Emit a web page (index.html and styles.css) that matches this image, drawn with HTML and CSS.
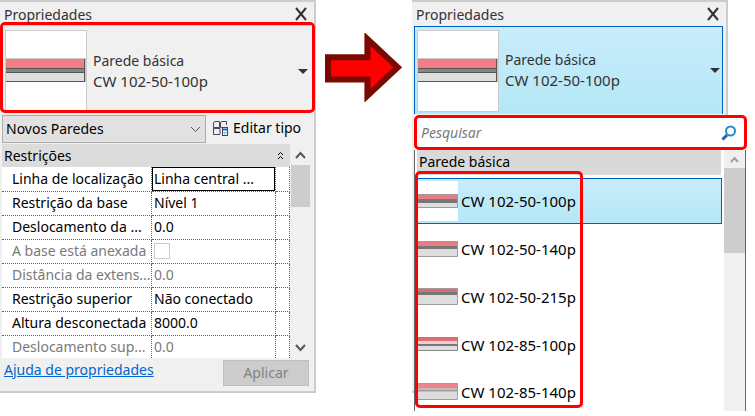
FILE: index.html
```html
<!DOCTYPE html>
<html lang="pt">

<head>
    <meta charset="UTF-8">
    <meta name="viewport" content="width=device-width, initial-scale=1.0">
    <title>Propriedades</title>
    <link rel="stylesheet" href="styles.css">
</head>

<body>
    <main class="page">
        <!-- Properties palette -->
        <section class="panel">
            <header class="title-bar">
                <h2>Propriedades</h2>
                <button class="close" aria-label="Fechar">
                    <svg width="14" height="14" viewBox="0 0 14 14"><path d="M2 1 L12 13 M12 1 L2 13" /></svg>
                </button>
            </header>

            <div class="highlight">
                <button class="type-selector">
                    <svg class="preview" viewBox="0 0 82 82">
                        <use href="#wall" />
                    </svg>
                    <span class="type-name">Parede básica<br><span class="code">CW 102-50-100p</span></span>
                    <span class="caret"></span>
                </button>
            </div>

            <div class="filter">
                <select aria-label="Filtro">
                    <option>Novos Paredes</option>
                </select>
                <button class="edit-type">
                    <svg width="17" height="17" viewBox="0 0 17 17">
                        <path class="sheet" d="M1.500 2.500 L3 1.500 H7.500 V7.500 H1.500 Z M8.500 7.500 V2.500 L10 1.500 H14.500 V5 M1.500 7.500 V14.500 H8 M8.500 7.500 H10 M1.500 9.500 L3 8.500 H8 V14" />
                        <rect class="calc" x="10.500" y="7.500" width="5" height="8" />
                        <path class="screen" d="M11 9.500 H15" />
                        <path class="keys" d="M11.500 12.500 H12.500 M13.500 12.500 H14.500 M12.500 14 H13.500" />
                    </svg>
                    Editar tipo
                </button>
            </div>

            <div class="grid-area">
                <table class="properties">
                    <colgroup>
                        <col class="col-name">
                        <col class="col-value">
                        <col class="col-link">
                    </colgroup>
                    <thead>
                        <tr>
                            <th colspan="3">
                                <div class="group">
                                    Restrições
                                    <button class="collapse" aria-label="Recolher">
                                        <svg width="7" height="10" viewBox="0 0 7 10"><path d="M1 4 L3.500 1.500 L6 4 M1 8 L3.500 5.500 L6 8" /></svg>
                                    </button>
                                </div>
                            </th>
                        </tr>
                    </thead>
                    <tbody>
                        <tr>
                            <td><label for="line">Linha de localização</label></td>
                            <td class="current"><input id="line" type="text" value="Linha central ..."></td>
                            <td></td>
                        </tr>
                        <tr>
                            <td><label for="base">Restrição da base</label></td>
                            <td><input id="base" type="text" value="Nível 1"></td>
                            <td></td>
                        </tr>
                        <tr>
                            <td><label for="offset">Deslocamento da ...</label></td>
                            <td><input id="offset" type="text" value="0.0"></td>
                            <td></td>
                        </tr>
                        <tr class="disabled">
                            <td><label for="attached">A base está anexada</label></td>
                            <td><input id="attached" type="checkbox" disabled></td>
                            <td></td>
                        </tr>
                        <tr class="disabled">
                            <td><label for="extension">Distância da extens...</label></td>
                            <td><input id="extension" type="text" value="0.0" disabled></td>
                            <td></td>
                        </tr>
                        <tr>
                            <td><label for="top">Restrição superior</label></td>
                            <td><input id="top" type="text" value="Não conectado"></td>
                            <td></td>
                        </tr>
                        <tr>
                            <td><label for="height">Altura desconectada</label></td>
                            <td><input id="height" type="text" value="8000.0"></td>
                            <td></td>
                        </tr>
                        <tr class="disabled">
                            <td><label for="top-offset">Deslocamento sup...</label></td>
                            <td><input id="top-offset" type="text" value="0.0" disabled></td>
                            <td></td>
                        </tr>
                    </tbody>
                </table>
                <div class="scrollbar">
                    <button aria-label="Para cima"><svg width="11" height="8" viewBox="0 0 11 8"><path d="M1 7 L5.500 2 L10 7" /></svg></button>
                    <div class="thumb"></div>
                    <button class="down" aria-label="Para baixo"><svg width="11" height="8" viewBox="0 0 11 8"><path d="M1 1 L5.500 6 L10 1" /></svg></button>
                </div>
            </div>

            <footer class="actions">
                <a href="#ajuda">Ajuda de propriedades</a>
                <button class="apply" disabled>Aplicar</button>
            </footer>
        </section>

        <svg class="arrow" viewBox="0 0 76 68">
            <path d="M3 24 H42 V6 L72 34 L42 62 V46 H3 V24 Z" />
        </svg>

        <!-- Same palette with the type list open -->
        <section class="panel panel-open">
            <header class="title-bar">
                <h2>Propriedades</h2>
                <button class="close" aria-label="Fechar">
                    <svg width="14" height="14" viewBox="0 0 14 14"><path d="M2 1 L12 13 M12 1 L2 13" /></svg>
                </button>
            </header>

            <button class="type-selector open">
                <svg class="preview" viewBox="0 0 82 82">
                    <use href="#wall" />
                </svg>
                <span class="type-name">Parede básica<br><span class="code">CW 102-50-100p</span></span>
                <span class="caret"></span>
            </button>

            <div class="dropdown">
                <div class="search">
                    <input type="search" placeholder="Pesquisar" aria-label="Pesquisar">
                    <svg width="16" height="16" viewBox="0 0 16 16">
                        <path d="M1.500 14.500 L6 10" />
                        <circle cx="9.500" cy="6" r="4.500" />
                    </svg>
                </div>
                <div class="list-area">
                    <div class="list">
                        <h3>Parede básica</h3>
                        <ul>
                            <li>
                                <button class="item selected">
                                    <svg class="mini" viewBox="0 0 40 40">
                                        <rect width="40" height="40" fill="#fff" />
                                        <rect y="13" width="40" height="5" fill="#e87c84" />
                                        <rect y="18" width="40" height="4" fill="#777" />
                                        <rect y="22" width="40" height="5" fill="#ddd" />
                                        <path d="M0 13.500 H40 M0 26.500 H39.500 V13" fill="none" stroke="#a39a9a" />
                                    </svg>
                                    <span class="code">CW 102-50-100p</span>
                                </button>
                            </li>
                            <li>
                                <button class="item">
                                    <svg class="mini" viewBox="0 0 40 40">
                                        <rect y="12" width="40" height="5" fill="#e87c84" />
                                        <rect y="17" width="40" height="3" fill="#777" />
                                        <rect y="20" width="40" height="8" fill="#ddd" />
                                        <path d="M0 12.500 H40 M0 27.500 H39.500 V12" fill="none" stroke="#a39a9a" />
                                    </svg>
                                    <span class="code">CW 102-50-140p</span>
                                </button>
                            </li>
                            <li>
                                <button class="item">
                                    <svg class="mini" viewBox="0 0 40 40">
                                        <rect y="11" width="40" height="4" fill="#dd6c75" />
                                        <rect y="15" width="40" height="3" fill="#777" />
                                        <rect y="18" width="40" height="9" fill="#ddd" />
                                        <path d="M0 11.500 H40 M0 27.500 H39.500 V11" fill="none" stroke="#a39a9a" />
                                    </svg>
                                    <span class="code">CW 102-50-215p</span>
                                </button>
                            </li>
                            <li>
                                <button class="item">
                                    <svg class="mini" viewBox="0 0 40 40">
                                        <rect y="12" width="40" height="4" fill="#dd6c75" />
                                        <rect y="16" width="40" height="3" fill="#eecfd0" />
                                        <rect y="19" width="40" height="2" fill="#777" />
                                        <rect y="21" width="40" height="4" fill="#ddd" />
                                        <path d="M0 12.500 H40 M0 25.500 H39.500 V12" fill="none" stroke="#888" />
                                    </svg>
                                    <span class="code">CW 102-85-100p</span>
                                </button>
                            </li>
                            <li>
                                <button class="item">
                                    <svg class="mini" viewBox="0 0 40 40">
                                        <rect y="11" width="40" height="5" fill="#ee838a" />
                                        <rect y="16" width="40" height="4" fill="#c4bcbc" />
                                        <rect y="20" width="40" height="7" fill="#ddd" />
                                        <path d="M0 11.500 H40 M0 18.500 H40 M0 27.500 H39.500 V11" fill="none" stroke="#a39a9a" />
                                    </svg>
                                    <span class="code">CW 102-85-140p</span>
                                </button>
                            </li>
                        </ul>
                    </div>
                    <div class="scrollbar">
                        <button aria-label="Para cima"><svg width="9" height="7" viewBox="0 0 9 7"><path d="M1 6 L4.500 2 L8 6" /></svg></button>
                        <div class="thumb"></div>
                    </div>
                </div>
                <div class="list-mark"></div>
            </div>
        </section>
    </main>

    <!-- Wall section used in both previews -->
    <svg class="defs">
        <symbol id="wall" viewBox="0 0 82 82">
            <rect x="0.500" y="0.500" width="81" height="81" fill="#fff" stroke="#ccc" />
            <rect x="1" y="28" width="80" height="24" fill="#c8c8c8" />
            <rect x="1" y="29" width="79" height="9" fill="#f27d85" />
            <rect x="1" y="38" width="79" height="5" fill="#858585" />
            <rect x="1" y="43" width="79" height="8" fill="#dedede" />
            <path d="M1 38.500 H80 M1 42.500 H80 M1 51.500 H80 M79.500 29 V52" fill="none" stroke="#555" />
        </symbol>
    </svg>
</body>

</html>
```

FILE: styles.css
```css
* {
    box-sizing: border-box;
}

body {
    margin: 0;
    background-color: #fff;
    color: #000;
    font-family: "Noto Sans", "Open Sans", sans-serif;
    font-size: 14px;
    line-height: 20px;
}

button,
input,
select {
    margin: 0;
    padding: 0;
    border: 0;
    background: none;
    color: inherit;
    font: inherit;
}

h2,
h3 {
    margin: 0;
    font-size: 14px;
    font-weight: normal;
}

svg {
    display: block;
    flex: none;
}

.defs {
    position: absolute;
    width: 0;
    height: 0;
}

.page {
    display: grid;
    grid-template-columns: 316fr 96fr 316fr 27fr;
    align-items: start;
    min-height: 100vh;
}

.panel {
    position: relative;
    border: 2px solid #ccc;
    border-left: 0;
    background-color: #f0f0f0;
}

.panel-open {
    min-height: 393px;
    padding-left: 2px;
}

.title-bar {
    display: flex;
    justify-content: space-between;
    align-items: center;
    height: 24px;
    padding: 0 6px 0 4px;
    color: #333;
}

.title-bar h2 {
    padding-top: 1px;
}

.panel-open .title-bar {
    padding-left: 2px;
}

.close path {
    fill: none;
    stroke: #333;
    stroke-width: 2;
}

/* Red marks drawn round the parts explained */
.highlight {
    margin: -4px -1px 0 0;
    border: 3px solid #f00;
    border-radius: 5px;
}

.type-selector {
    display: flex;
    align-items: center;
    gap: 6px;
    width: 100%;
    height: 85px;
    padding: 6px 4px 0 2px;
    color: #333;
    text-align: left;
    overflow: hidden;
}

.highlight .type-selector {
    border-top: 1px solid #ccc;
}

.preview {
    width: 82px;
    height: 82px;
}

.type-name {
    flex: 1;
}

.code {
    font-size: 15px;
}

.caret {
    border: 5px solid transparent;
    border-top-color: #333;
    border-bottom: 0;
}

.type-selector.open {
    width: calc(100% - 3px);
    height: 88px;
    border: 1px solid #0060bf;
    border-bottom: 0;
    background: linear-gradient(#c8ecfb, #b5e7f6);
    padding: 0 2px;
}

.filter {
    display: flex;
    gap: 6px;
    padding: 2px 0 1px 2px;
}

.filter select {
    appearance: none;
    width: 204px;
    height: 28px;
    padding: 0 3px;
    border: 1px solid #adadad;
    background: #e1e1e1 url("data:image/svg+xml,%3Csvg xmlns='http://www.w3.org/2000/svg' width='11' height='7'%3E%3Cpath d='M1 1 L5.500 5.500 L10 1' fill='none' stroke='%23555'/%3E%3C/svg%3E") no-repeat right 4px center;
}

.edit-type {
    display: flex;
    align-items: center;
    gap: 4px;
    height: 26px;
    white-space: nowrap;
}

.edit-type path,
.edit-type rect {
    fill: none;
    stroke: #45475a;
}

.edit-type .calc {
    fill: #fff;
}

.edit-type .screen,
.edit-type .keys {
    stroke: #0070c0;
}

.edit-type .screen {
    stroke-width: 2;
}

.grid-area {
    display: flex;
    padding: 0 4px 0 2px;
}

.properties {
    flex: 1;
    table-layout: fixed;
    width: 0;
    border-collapse: collapse;
    background-color: #fff;
}

.col-name {
    width: 52%;
}

.col-value {
    width: 43%;
}

.col-link {
    width: 5%;
}

.properties th {
    height: 23px;
    padding: 0 6px 0 2px;
    background-color: #dcdcdc;
    font-weight: normal;
    text-align: left;
}

.group {
    display: flex;
    justify-content: space-between;
}

.collapse path {
    fill: none;
    stroke: #000;
}

.properties td {
    height: 24px;
    padding: 0 2px;
    border-right: 1px dotted #666;
    border-bottom: 1px dotted #666;
    white-space: nowrap;
}

.properties td:first-child {
    padding-left: 10px;
}

.properties tbody tr:last-child td {
    height: 23px;
    border-bottom: 0;
}

.properties label {
    display: block;
}

.properties input {
    display: block;
    width: 100%;
    height: 20px;
}

.properties .current {
    outline: 1px solid #000;
    outline-offset: -1px;
}

.properties input[type="checkbox"] {
    appearance: none;
    width: 16px;
    height: 16px;
    border: 1px solid #ccc;
    background-color: #fff;
}

.disabled {
    color: #7a7a7a;
}

.scrollbar {
    display: flex;
    flex-direction: column;
    width: 20px;
    padding-left: 1px;
    background-color: #f0f0f0;
}

.scrollbar button {
    display: flex;
    justify-content: center;
    align-items: center;
    height: 21px;
}

.scrollbar path {
    fill: none;
    stroke: #555;
    stroke-width: 2;
}

.scrollbar .thumb {
    height: 42px;
    background-color: #cdcdcd;
}

.scrollbar .down {
    margin-top: auto;
}

.actions {
    display: flex;
    justify-content: space-between;
    align-items: start;
    padding: 2px 5px 5px 4px;
}

.actions a {
    color: #0066cc;
}

.apply {
    width: 86px;
    height: 26px;
    border: 1px solid #bfbfbf;
    background-color: #ccc;
    color: #838383;
}

.arrow {
    width: 80%;
    margin: 33px 0 0 9px;
}

.arrow path {
    fill: #f00;
    stroke: #780a00;
    stroke-width: 6;
}

/* Type list that opens over the palette */
.dropdown {
    position: absolute;
    top: 113px;
    left: 2px;
    right: -21px;
    background-color: #fff;
}

.search {
    display: flex;
    align-items: center;
    height: 35px;
    padding: 0 7px 0 4px;
    border: 3px solid #f00;
    border-radius: 5px;
}

.search input {
    flex: 1;
    min-width: 0;
    font-style: italic;
}

.search input::placeholder {
    color: #7a7a7a;
    opacity: 1;
}

.search path {
    fill: none;
    stroke: #2b5fa8;
    stroke-width: 3;
}

.search circle {
    fill: #fff;
    stroke: #1f8dc9;
    stroke-width: 2;
}

.list-area {
    display: flex;
    margin-right: 1px;
    border: 1px solid #666;
    border-top: 0;
    border-bottom: 0;
}

.list {
    flex: 1;
    padding-right: 2px;
}

.list h3 {
    height: 25px;
    margin: 0 1px 3px 2px;
    padding: 2px;
    background-color: #d9d9d9;
}

.list ul {
    margin: 0;
    padding: 0;
    list-style-type: none;
}

.item {
    display: flex;
    align-items: center;
    gap: 3px;
    width: 100%;
    height: 46px;
    margin-bottom: 2px;
    padding-left: 2px;
    border: 1px solid transparent;
}

/* The list is cut off by its lower edge */
.list li:last-child .item {
    height: 41px;
    margin: 0;
    padding-top: 3px;
}

.item.selected {
    border-color: #0060bf;
    background: linear-gradient(#c8ecfb, #b5e7f6);
}

.mini {
    width: 40px;
    height: 40px;
}

.list-area .scrollbar {
    width: 21px;
    padding: 0;
}

.list-area .scrollbar button {
    height: 18px;
}

.list-area .scrollbar path {
    stroke: #a0a0a0;
}

.list-area .thumb {
    height: 85px;
}

.list-mark {
    position: absolute;
    top: 56px;
    left: 1px;
    width: 168px;
    bottom: 3px;
    border: 3px solid #f00;
    border-radius: 5px;
    pointer-events: none;
}
```
